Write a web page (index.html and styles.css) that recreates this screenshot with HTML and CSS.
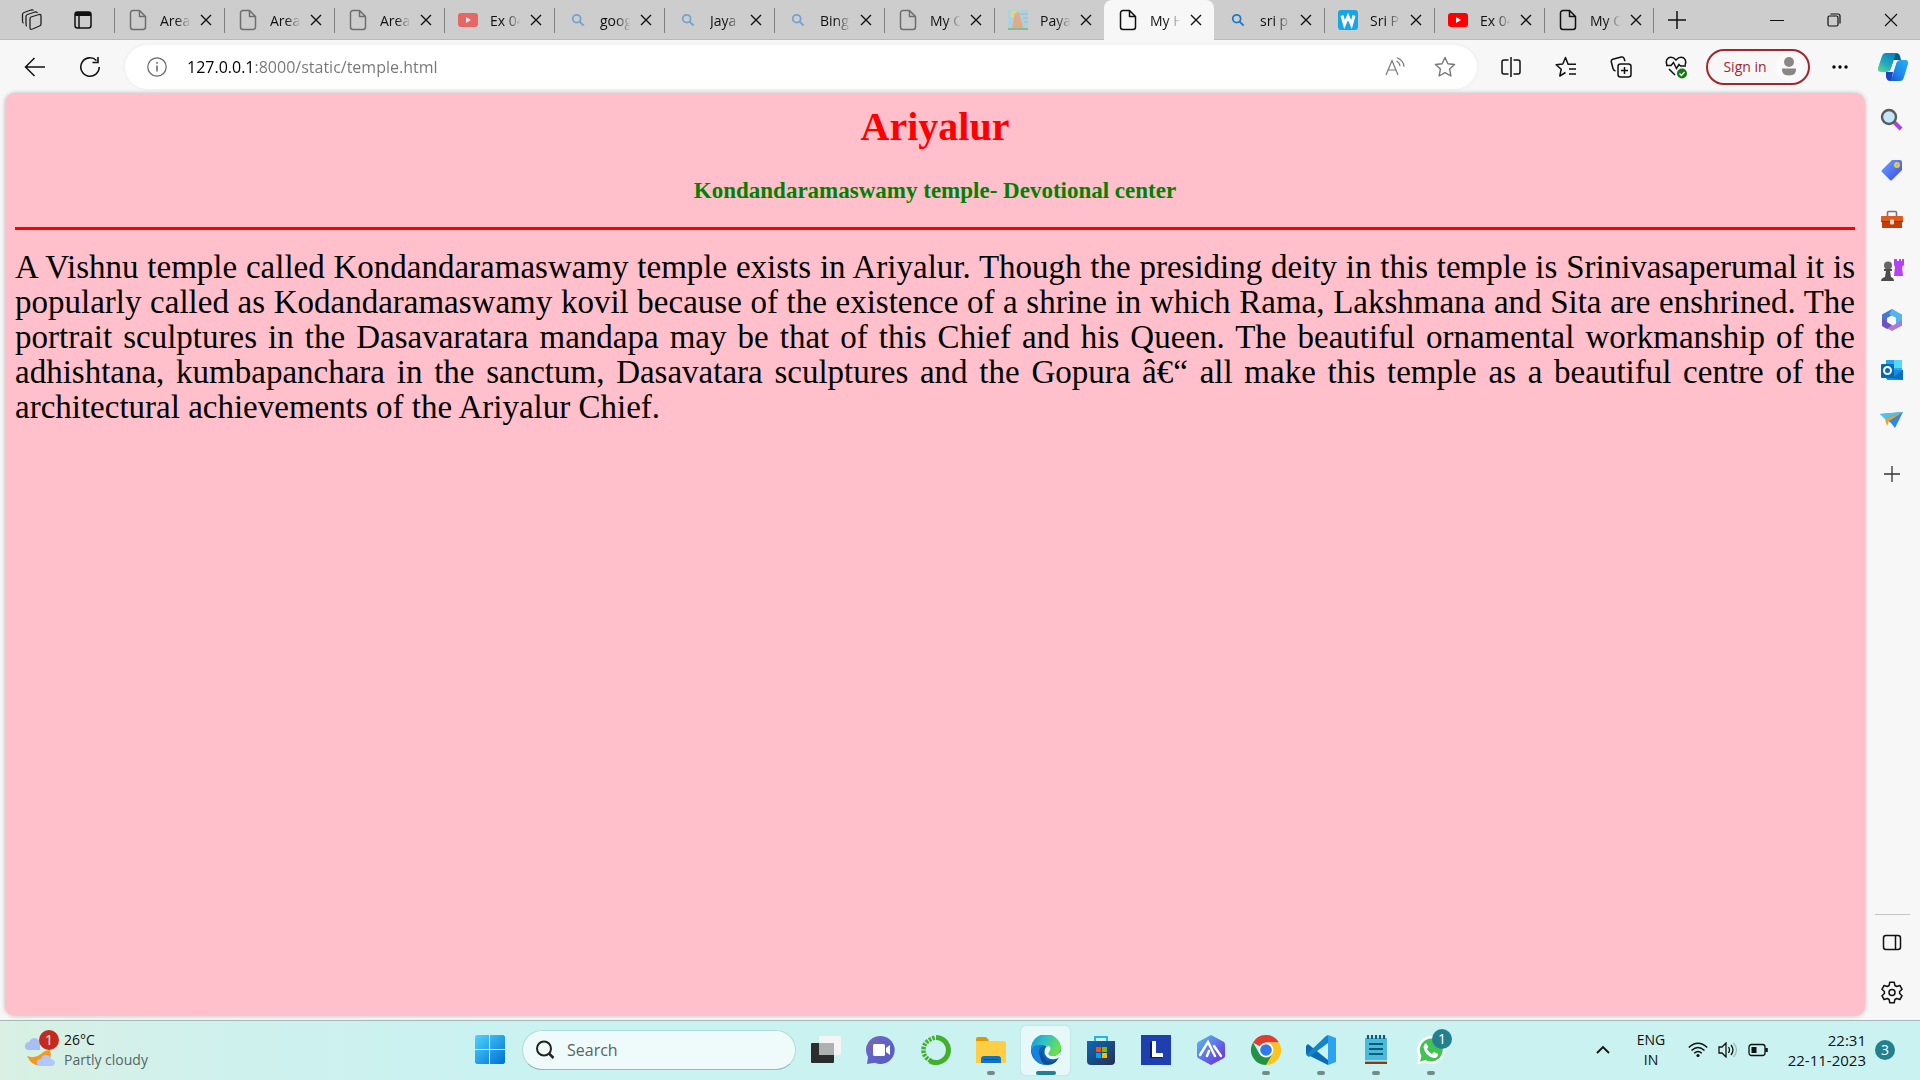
FILE: index.html
```
<!DOCTYPE html>
<html lang="en">
<head>
<meta charset="utf-8">
<title>My Home</title>
<link rel="stylesheet" href="styles.css">
</head>
<body>
<svg class="defs" aria-hidden="true">
  <defs>
    <symbol id="page" viewBox="0 0 20 22"><path d="M5 1.5h6.5l6 6V18a2.5 2.5 0 0 1-2.500 2.500H5A2.500 2.500 0 0 1 2.500 18V4A2.500 2.500 0 0 1 5 1.500zM11.500 1.500V7.500h6" fill="none" stroke="currentColor" stroke-width="1.500" stroke-linejoin="round"/></symbol>
    <symbol id="x" viewBox="0 0 12 12"><path d="M1 1l10 10M11 1L1 11" stroke="currentColor" stroke-width="1.400" fill="none"/></symbol>
    <symbol id="tube" viewBox="0 0 20 16"><rect width="20" height="14" y="1" rx="3" fill="#f00"/><path d="M8 5v6l5-3z" fill="#fff"/></symbol>
    <symbol id="lens" viewBox="0 0 16 16"><circle cx="6.500" cy="6.500" r="4.500" fill="none" stroke="#1a78d0" stroke-width="2"/><path d="M9.500 9.500l5 5" stroke="#1a78d0" stroke-width="2.200"/></symbol>
    <symbol id="paint" viewBox="0 0 20 20"><path d="M0 0h20v20H0z" fill="#8cd9ee"/><circle cx="6" cy="4" r="3.500" fill="#fbe23c"/><path d="M7 3l4-1 4 16H4z" fill="#f28a4a"/><path d="M12 4h8M15 8h5M16 12h4" stroke="#7c9ad8" stroke-width="1.200"/><path d="M0 18h20v2H0z" fill="#45a860"/></symbol>
    <symbol id="wlogo" viewBox="0 0 20 20"><rect width="20" height="20" rx="3" fill="#17a5e6"/><path d="M4 5.500l2.500 9 3.500-8 3.500 8 2.500-9" fill="none" stroke="#fff" stroke-width="3"/></symbol>
    <symbol id="plus" viewBox="0 0 20 20"><path d="M10 1v18M1 10h18" stroke="currentColor" stroke-width="1.500"/></symbol>
  </defs>
</svg>

<header class="titlebar">
  <div class="tools">
    <button aria-label="Workspaces"><svg width="22" height="22" viewBox="0 0 22 22" fill="none" stroke="#222" stroke-width="1.300" stroke-linejoin="round"><path d="M10 8l8-2.500q2-.5 2 1.500v8q0 1.500-1.500 2l-7 3Q9 21 9 19V10q0-1.500 1-2zM6 17q-1 0-1-2V7.500q0-1.500 1.500-2L14 3q2-.5 2.500 1M2.500 14Q1.500 14 1.500 12V5.500Q1.500 4 3 3.500L10 1q2-.5 2.500.5"/></svg></button>
    <button aria-label="Tab actions"><svg width="20" height="20" viewBox="0 0 20 20" fill="none" stroke="#111" stroke-width="1.500"><rect x="2" y="2" width="16" height="16" rx="2.500"/><path d="M6 6v12"/><path d="M2 4h16" stroke-width="4"/></svg></button>
  </div>
  <nav class="tabs" aria-label="Tabs">
    <div class="tab asleep"><svg class="fav"><use href="#page"/></svg><a href="#">Area</a><button aria-label="Close"><svg><use href="#x"/></svg></button></div>
    <div class="tab asleep"><svg class="fav"><use href="#page"/></svg><a href="#">Area</a><button aria-label="Close"><svg><use href="#x"/></svg></button></div>
    <div class="tab asleep"><svg class="fav"><use href="#page"/></svg><a href="#">Area</a><button aria-label="Close"><svg><use href="#x"/></svg></button></div>
    <div class="tab asleep"><svg class="fav"><use href="#tube"/></svg><a href="#">Ex 04</a><button aria-label="Close"><svg><use href="#x"/></svg></button></div>
    <div class="tab asleep"><svg class="fav small"><use href="#lens"/></svg><a href="#">goog</a><button aria-label="Close"><svg><use href="#x"/></svg></button></div>
    <div class="tab asleep"><svg class="fav small"><use href="#lens"/></svg><a href="#">Jaya</a><button aria-label="Close"><svg><use href="#x"/></svg></button></div>
    <div class="tab asleep"><svg class="fav small"><use href="#lens"/></svg><a href="#">Bing</a><button aria-label="Close"><svg><use href="#x"/></svg></button></div>
    <div class="tab asleep"><svg class="fav"><use href="#page"/></svg><a href="#">My C</a><button aria-label="Close"><svg><use href="#x"/></svg></button></div>
    <div class="tab asleep"><svg class="fav"><use href="#paint"/></svg><a href="#">Paya</a><button aria-label="Close"><svg><use href="#x"/></svg></button></div>
    <div class="tab active"><svg class="fav"><use href="#page"/></svg><a href="#">My H</a><button aria-label="Close"><svg><use href="#x"/></svg></button></div>
    <div class="tab bare"><svg class="fav small"><use href="#lens"/></svg><a href="#">sri p</a><button aria-label="Close"><svg><use href="#x"/></svg></button></div>
    <div class="tab"><svg class="fav"><use href="#wlogo"/></svg><a href="#">Sri P</a><button aria-label="Close"><svg><use href="#x"/></svg></button></div>
    <div class="tab"><svg class="fav"><use href="#tube"/></svg><a href="#">Ex 04</a><button aria-label="Close"><svg><use href="#x"/></svg></button></div>
    <div class="tab last"><svg class="fav"><use href="#page"/></svg><a href="#">My C</a><button aria-label="Close"><svg><use href="#x"/></svg></button></div>
  </nav>
  <button class="newtab" aria-label="New tab"><svg width="20" height="20"><use href="#plus"/></svg></button>
  <div class="winctl">
    <button aria-label="Minimise"><svg width="14" height="14" viewBox="0 0 14 14"><path d="M0 7.500h14" stroke="#111" stroke-width="1"/></svg></button>
    <button aria-label="Restore"><svg width="14" height="14" viewBox="0 0 14 14" fill="none" stroke="#111" stroke-width="1.200"><rect x="1" y="3" width="10" height="10" rx="1.500"/><path d="M3.500 1H11q2 0 2 2v7.500"/></svg></button>
    <button aria-label="Close window"><svg width="14" height="14" viewBox="0 0 14 14" stroke="#111" stroke-width="1.100"><path d="M1 1l12 12M13 1L1 13"/></svg></button>
  </div>
</header>

<div class="toolbar">
  <button class="nav" aria-label="Back"><svg width="22" height="22" viewBox="0 0 22 22" fill="none" stroke="#111" stroke-width="1.500"><path d="M21 11H2M10.500 2L1.500 11l9 9"/></svg></button>
  <button class="nav" aria-label="Refresh"><svg width="22" height="22" viewBox="0 0 22 22" fill="none" stroke="#111" stroke-width="1.600"><path d="M17.500 4.500A9.200 9.200 0 1 0 20.200 11M19 1v5.500h-5.500"/></svg></button>
  <div class="omnibox">
    <button aria-label="Site information"><svg width="20" height="20" viewBox="0 0 20 20" fill="none" stroke="#666" stroke-width="1.200"><circle cx="10" cy="10" r="9.200"/><path d="M10 8.500v6M10 5v1.800" stroke-width="1.500"/></svg></button>
    <input class="url" type="text" aria-label="Address" value="127.0.0.1:8000/static/temple.html" spellcheck="false">
    <button class="wide" aria-label="Read aloud"><svg width="20" height="20" viewBox="0 0 20 20" fill="none" stroke="#777" stroke-width="1.200"><path d="M1 18L7 3.500 13 18M3.200 13h7.700M11.500 4q3 1.500 3.500 5M12 .8q6.500 2.500 7 9"/></svg></button>
    <button class="wide" aria-label="Add to favourites"><svg width="22" height="22" viewBox="0 0 22 22" fill="none" stroke="#777" stroke-width="1.400" stroke-linejoin="round"><path d="M11 1.500l2.900 6.200 6.700.8-5 4.600 1.300 6.900L11 16.700 5.100 20l1.300-6.900-5-4.600 6.700-.8z"/></svg></button>
  </div>
  <div class="actions">
    <button aria-label="Split screen"><svg width="20" height="20" viewBox="0 0 20 20" fill="none" stroke="#111" stroke-width="1.500"><path d="M7.500 3H3Q1 3 1 5v10q0 2 2 2h4.500M12.500 3H17q2 0 2 2v10q0 2-2 2h-4.500M10 0v20"/></svg></button>
    <button aria-label="Favourites"><svg width="22" height="22" viewBox="0 0 22 22" fill="none" stroke="#111" stroke-width="1.500" stroke-linejoin="round"><path d="M12.500 8.200H21M14 13h7M14 18h7M13 8l-2.500-6.500L7.800 8 1.200 8.800l5 4.500L4.800 20l5.700-3.500"/></svg></button>
    <button aria-label="Collections"><svg width="22" height="22" viewBox="0 0 22 22" fill="none" stroke="#111" stroke-width="1.500"><rect x="8" y="8" width="13" height="13" rx="2.500"/><path d="M14.500 11v7M11 14.500h7M5.500 15Q3.500 14.500 3 12.500L1.300 6Q.8 4 2.800 3.300l8.500-2.200q2-.5 2.700 1.200l1 3"/></svg></button>
    <button aria-label="Browser essentials"><svg width="22" height="24" viewBox="0 0 22 24" fill="none" stroke="#111" stroke-width="1.500"><path d="M2 10Q0 5 3.500 2.800 7.500 1 11 5q3.500-4 7.500-2.200Q22 5 20 10M4 14l6 6M1 10.500h5l2.500-3 3 6 2.500-4 1.500 1.500H21"/><circle cx="17" cy="18.500" r="5" fill="#107c10" stroke="none"/><path d="M14.500 18.500l2 2 3-3.500" stroke="#fff" stroke-width="1.200"/></svg></button>
  </div>
  <button class="signin">Sign in <svg width="28" height="28" viewBox="0 0 28 28"><circle cx="14" cy="14" r="14" fill="#fbfafa"/><circle cx="14" cy="9" r="5" fill="#8b8786"/><path d="M7 15.500h14q1 6.500-7 7-8-.5-7-7z" fill="#8b8786"/></svg></button>
  <button class="more" aria-label="Settings and more"><svg width="18" height="6" viewBox="0 0 18 6"><circle cx="3" cy="3" r="1.700"/><circle cx="9" cy="3" r="1.700"/><circle cx="15" cy="3" r="1.700"/></svg></button>
  <button class="copilot" aria-label="Copilot"><svg width="30" height="28" viewBox="0 0 30 28"><defs><linearGradient id="cp1" x1="0" y1="1" x2=".6" y2="0"><stop stop-color="#62dd8e"/><stop offset=".5" stop-color="#22a9bd"/><stop offset="1" stop-color="#0a86c0"/></linearGradient><linearGradient id="cp2" x1="0" y1="1" x2="1" y2="0"><stop stop-color="#1a4fd6"/><stop offset=".5" stop-color="#1c8eea"/><stop offset="1" stop-color="#25b0f2"/></linearGradient></defs><path d="M15 0h3q3 0 4 3l1 4h-8z" fill="#075c8e"/><path d="M8 19h7l-1 6q-1 3-2 3-3 0-4-4z" fill="#1646c0"/><path d="M8 0h12q-2 0-3 2l-1 5-3 9q-1 3-4 3H3q-4 0-3-4L4 3Q5 0 8 0z" fill="url(#cp1)"/><path d="M22 28H11q2-1 3-4l4-13q1-4 4-4h5q4 0 3 4l-4 13q-1 4-4 4z" fill="url(#cp2)"/><path d="M16 7h5q-2 1-3 3l-2 6q-1 3-4 3H9q3 0 4-3z" fill="#fff"/></svg></button>
</div>

<div class="middle">
  <main class="viewport">
    <h1>Ariyalur</h1>
    <h3>Kondandaramaswamy temple- Devotional center</h3>
    <hr>
    <p>A Vishnu temple called Kondandaramaswamy temple exists in Ariyalur. Though the presiding deity in this temple is Srinivasaperumal it is popularly called as Kodandaramaswamy kovil because of the existence of a shrine in which Rama, Lakshmana and Sita are enshrined. The portrait sculptures in the Dasavaratara mandapa may be that of this Chief and his Queen. The beautiful ornamental workmanship of the adhishtana, kumbapanchara in the sanctum, Dasavatara sculptures and the Gopura â€“ all make this temple as a beautiful centre of the architectural achievements of the Ariyalur Chief.</p>
  </main>
  <aside class="sidebar">
    <button aria-label="Search"><svg viewBox="0 0 24 24"><path d="M14 14l7 7" stroke="#b23bef" stroke-width="4"/><path d="M13 13l3 3" stroke="#777" stroke-width="2.500"/><circle cx="9" cy="9" r="7" fill="#c3e6fa" stroke="#5b5b5b" stroke-width="2.400"/></svg></button>
    <button aria-label="Shopping"><svg viewBox="0 0 24 24"><defs><linearGradient id="tag" x1="0" y1="0" x2="1" y2="1"><stop stop-color="#6ea8ff"/><stop offset="1" stop-color="#3845e8"/></linearGradient></defs><path d="M12 2h8q2 0 2 2v8L12 22q-1 1-2 0L2 14q-1-1 0-2z" fill="url(#tag)"/><circle cx="17" cy="7" r="2.200" fill="#9bd" stroke="#fc2" stroke-width="1.500"/></svg></button>
    <button aria-label="Tools"><svg viewBox="0 0 24 24"><path d="M7.500 8V4.500Q7.500 3.500 8.500 3.500h7q1 0 1 1V8" fill="none" stroke="#777" stroke-width="1.600"/><path d="M2 8h20q1 0 1 1v5H1V9q0-1 1-1z" fill="#e35b1b"/><path d="M2 14h20v6H2z" fill="#c43d0b"/><path d="M1 13.500h22" stroke="#962c08"/><rect x="10" y="11.500" width="4" height="5" rx="1" fill="#ddd"/></svg></button>
    <button aria-label="Games"><svg viewBox="0 0 24 24"><path d="M14 1h3v2h2V1h2v2h1V1h2v6l-2 2 1 9h-9l1-9-1-2z" fill="#b541f2"/><circle cx="8" cy="7.500" r="4" fill="#666"/><path d="M4 11h8v2h-2l1 6q3 1 3 4H1q0-3 4-4l1-6H4z" fill="#4d4d4d"/></svg></button>
    <button aria-label="Microsoft 365"><svg viewBox="0 0 24 24"><path d="M12 1L2 6.500v11l5 3V10l8-4.500V3z" fill="#4a75d8"/><path d="M12 1l10 5.500v11l-6 3V10L9 6z" fill="#53b5ed"/><path d="M22 12v5.500L12 23 4 18.500l4-3 5 2z" fill="#ad78d7"/><path d="M2 10v8l5 3 5-4-5-3z" fill="#7250bd"/><path d="M12 8l4 2v4l-4 3-4-3v-4z" fill="#f7f7f7"/></svg></button>
    <button aria-label="Outlook"><svg viewBox="0 0 24 24"><path d="M6 2h15q1 0 1 1v18H6z" fill="#28a8ea"/><path d="M14 2h8v8h-8z" fill="#50d9ff"/><path d="M9 12h14v10H7z" fill="#1490df"/><path d="M23 12L12 20l11 2z" fill="#0a6fbe"/><rect x="1" y="6" width="13" height="14" rx="1" fill="#0868b8"/><circle cx="7.500" cy="12.500" r="3.500" fill="none" stroke="#fff" stroke-width="2"/></svg></button>
    <button aria-label="Drop"><svg viewBox="0 0 24 24"><path d="M0 6l23-2-8 16-4-5z" fill="#2f88e8"/><path d="M0 6l23-2L5 11z" fill="#45c5f2"/><path d="M5 11l18-7-14 9-2 5z" fill="#f6a01a"/></svg></button>
    <button class="add" aria-label="Customize"><svg viewBox="0 0 20 20"><path d="M10 2v16M2 10h16" stroke="#333" stroke-width="1.300"/></svg></button>
    <div class="foot">
      <button aria-label="Hide sidebar"><svg viewBox="0 0 24 24" fill="none" stroke="#111" stroke-width="1.500"><rect x="3.500" y="4.500" width="17" height="14" rx="2.500"/><path d="M15.500 4.500v14"/></svg></button>
      <button aria-label="Settings"><svg viewBox="0 0 24 24" fill="none" stroke="#111" stroke-width="1.500" stroke-linejoin="round"><path d="M9.800 2.200h4.400l.7 3.300 1.800 1 3.200-1 2.200 3.800-2.500 2.200v2l2.500 2.200-2.200 3.800-3.200-1-1.800 1-.7 3.300H9.800l-.7-3.300-1.800-1-3.200 1-2.200-3.800 2.500-2.200v-2L1.900 9.300l2.200-3.800 3.200 1 1.800-1z"/><circle cx="12" cy="12.500" r="3"/></svg></button>
    </div>
  </aside>
</div>

<footer class="taskbar">
  <button class="weather">
    <span class="wicon"><svg width="32" height="36" viewBox="0 0 32 36"><path d="M4 18q-4-1-3-5 1-3 4-3 2-4 6-4 4 1 5 5v7z" fill="#a7bff2"/><path d="M3 24q8 3 14-2 4-4 9-4 3 9-5 14-12 5-18-8z" fill="#f19a20"/><path d="M16 34q-4-1-3-5 1-2 4-2 1-4 5-4 4 0 5 4 4 1 4 4-1 3-3 3z" fill="#b1c7f7"/></svg><span class="badge red">1</span></span>
    <span class="wtext"><span>26°C</span><span class="dim">Partly cloudy</span></span>
  </button>
  <div class="dock">
    <button class="start" aria-label="Start"><svg width="30" height="30" viewBox="0 0 30 30"><defs><linearGradient id="win" x1="0" y1="0" x2="1" y2="1"><stop stop-color="#4fd2ff"/><stop offset="1" stop-color="#0070d2"/></linearGradient></defs><path d="M1.500 0H14v14H0V1.500zM15 0h13.500L30 1.500V14H15zM0 15h14v14H1.500L0 27.500zM15 15h15v12.500L28.500 29H15z" fill="url(#win)"/></svg></button>
    <label class="search"><svg width="20" height="20" viewBox="0 0 20 20" fill="none" stroke="#222"><circle cx="9" cy="8.500" r="7" stroke-width="2"/><path d="M14 13.500l4.500 4.500" stroke-width="2.500"/></svg><input type="text" placeholder="Search" aria-label="Search"></label>
    <button class="app" aria-label="Task view"><svg viewBox="0 0 30 30"><rect y="8" width="23" height="20" rx="1" fill="#2d2d2d"/><rect x="8" y="1" width="22" height="19" rx="1" fill="#f4f4f4"/><path d="M8 8h15v12H8z" fill="#aeb1b1"/></svg></button>
    <button class="app" aria-label="Chat"><svg viewBox="0 0 30 30"><defs><linearGradient id="chat" x1="0" y1="0" x2="1" y2="1"><stop stop-color="#8661a9"/><stop offset=".4" stop-color="#6264c9"/><stop offset="1" stop-color="#5658c0"/></linearGradient></defs><path d="M15 1a14 14 0 1 1-6 26.800L1 29l1-7A14 14 0 0 1 15 1z" fill="url(#chat)"/><rect x="7" y="9" width="12" height="12" rx="1.500" fill="#fff"/><path d="M20 13l4-3v10l-4-3z" fill="#fff"/></svg></button>
    <button class="app" aria-label="Anaconda"><svg viewBox="0 0 30 30" fill="none" stroke="#43b02a"><path d="M15 2.500a12.500 12.500 0 1 1-6 23.500" stroke-width="5"/><path d="M10 26Q2 22 2.500 14T14 2.500" stroke-width="4.500" stroke-dasharray="2.500 1.200"/></svg></button>
    <button class="app open" aria-label="File Explorer"><svg viewBox="0 0 30 30"><path d="M0 4q0-2 2-2h8l3 3-2 3H0z" fill="#d99a05"/><path d="M0 6h28q2 0 2 2v20H0z" fill="#ffce45"/><path d="M5 28v-4q0-3 3-3h14q3 0 3 3v4z" fill="#1272c4"/><path d="M8 24.500h14" stroke="#0a4f8c"/></svg></button>
    <button class="app open current" aria-label="Edge"><svg viewBox="0 0 30 30"><defs><linearGradient id="ed1" x1="0" y1="0" x2="1" y2=".4"><stop stop-color="#1a8fd2"/><stop offset=".5" stop-color="#2dc3c7"/><stop offset="1" stop-color="#6be04a"/></linearGradient></defs><circle cx="15" cy="15" r="15" fill="#0c62b8"/><path d="M0 15A15 15 0 0 1 30 13q0 7-8 8-6 0-4-4 0-6-7-7Q4 10 0 15z" fill="url(#ed1)"/><path d="M0 15q4-7 12-4-5 2-4 8 2 8 10 10.500Q4 32 0 15z" fill="#1683dc"/><path d="M12 14q-3 7 4 12 6 2 11-2-5 8-14 5-7-7-1-15z" fill="#114c94"/><path d="M18 11q3 2 0 6-2 4 4 4 5 0 8-5l-1 6q-6 4-12 1-5-4-3-9 1-3 4-3z" fill="#e8f8f8"/></svg></button>
    <button class="app" aria-label="Store"><svg viewBox="0 0 30 30"><defs><linearGradient id="st" x1="0" y1="0" x2="1" y2="1"><stop stop-color="#0c69b8"/><stop offset="1" stop-color="#272f51"/></linearGradient></defs><path d="M9 7V2h12v5" fill="none" stroke="#1fb5f4" stroke-width="2"/><path d="M1 6h28v20q0 4-4 4H5q-4 0-4-4z" fill="url(#st)"/><path d="M10 12h5v5h-5z" fill="#f25022"/><path d="M16 12h5v5h-5z" fill="#7fba00"/><path d="M10 18h5v5h-5z" fill="#00a4ef"/><path d="M16 18h5v5h-5z" fill="#ffb900"/></svg></button>
    <button class="app" aria-label="Lens"><svg viewBox="0 0 30 30"><path d="M0 0h30v30H0z" fill="#1e3fae"/><path d="M11 6l-2 2v15h12v-3H11z" fill="#0d1c5c"/><path d="M11 6h4v12h7v4H11z" fill="#fff"/></svg></button>
    <button class="app" aria-label="Android tool"><svg viewBox="0 0 30 30"><defs><linearGradient id="hx" x1="0" y1="0" x2="1" y2="1"><stop stop-color="#55c2ec"/><stop offset="1" stop-color="#6c1fe6"/></linearGradient></defs><path d="M15 0l13 7q1 1 1 3v11q0 1-1 2l-13 7-13-7q-1-1-1-2V9q0-1 1-2z" fill="url(#hx)"/><path d="M4 20L12 7l7 14M11 21l2-5M18 11l7 10" fill="none" stroke="#fff" stroke-width="2.500" stroke-linecap="round"/></svg></button>
    <button class="app open" aria-label="Chrome"><svg viewBox="0 0 30 30"><path d="M15 15L2 7.500A15 15 0 0 1 28 7.500H15z" fill="#e33b2e"/><path d="M15 7.500h13A15 15 0 0 1 15 30l6.500-11.200z" fill="#fcc31e"/><path d="M2 7.500A15 15 0 0 0 15 30l6.500-11.200h-13z" fill="#229342"/><circle cx="15" cy="15" r="7.500" fill="#fff"/><circle cx="15" cy="15" r="5.800" fill="#3079ed"/></svg></button>
    <button class="app open" aria-label="Visual Studio Code"><svg viewBox="0 0 30 30"><path d="M0 11l2-2 20 16v5L0 19z" fill="#0a6db3"/><path d="M22 0v8L3 22l-3-2L20 1z" fill="#1484cb"/><path d="M22 0l8 3v24l-8 3z" fill="#2ba3ee"/></svg></button>
    <button class="app open" aria-label="Notepad"><svg viewBox="0 0 30 30"><path d="M4 3h22v23H4z" fill="#4cbad9"/><path d="M4 26h22v3H4z" fill="#8a3d0b"/><path d="M4 26h22" stroke="#fff"/><path d="M8 9h14M8 14h14M8 19h14" stroke="#0a5c7c" stroke-width="2"/><path d="M7 0v4M11 0v4M15 0v4M19 0v4M23 0v4" stroke="#0a5c7c" stroke-width="2.200"/></svg></button>
    <button class="app open" aria-label="WhatsApp"><svg viewBox="0 0 30 30"><path d="M15 1a14 14 0 1 1-6 26.500L1 29.500 3 22A14 14 0 0 1 15 1z" fill="#fff"/><path d="M15 3.500A11.500 11.500 0 1 1 9.500 25L4 26.500 5.500 21A11.500 11.500 0 0 1 15 3.500z" fill="#3fc351"/><path d="M10 8l2.500 4-1.500 2q2 4 5 5l2-2 4 2q0 4-4 4-9-2-10.500-11Q8 9 10 8z" fill="#fff"/></svg><span class="badge teal">1</span></button>
  </div>
  <div class="tray">
    <button class="chev" aria-label="Hidden icons"><svg width="14" height="10" viewBox="0 0 14 10"><path d="M1 8l6-6 6 6" fill="none" stroke="#111" stroke-width="1.800"/></svg></button>
    <button class="lang"><span>ENG</span><span>IN</span></button>
    <button class="status" aria-label="Network, volume, battery">
      <svg width="20" height="16" viewBox="0 0 20 16" fill="none" stroke="#111" stroke-width="1.500"><path d="M.8 5.500q9.200-8.500 18.400 0M3.500 8.500q6.500-6 13 0M6.200 11.300q3.800-3.500 7.600 0"/><circle cx="10" cy="13.500" r="1.600" fill="#111" stroke="none"/></svg>
      <svg width="20" height="16" viewBox="0 0 20 16" fill="none" stroke="#111" stroke-width="1.300"><path d="M1 5h3l4-4v14l-4-4H1zM10.500 5q2 3 0 6M13 3q4 5 0 10"/><path d="M15.500 1q6 7 0 14" stroke="#9fbcbc"/></svg>
      <svg width="20" height="16" viewBox="0 0 20 16" fill="none" stroke="#111" stroke-width="1.300"><rect x="1" y="2.500" width="16" height="11" rx="2.500"/><path d="M3.500 5h5v6h-5z" fill="#111" stroke="none"/><path d="M18.500 6v4" stroke-width="2.500"/></svg>
    </button>
    <button class="clock"><span>22:31</span><span>22-11-2023</span></button>
    <span class="badge teal count">3</span>
  </div>
</footer>
</body>
</html>
```
FILE: styles.css
```
* { box-sizing: border-box; }
body {
  margin: 0;
  height: 100vh;
  display: flex;
  flex-direction: column;
  overflow: hidden;
  background: #f7f7f7;
  color: #111;
  font-family: "Open Sans", "Noto Sans", sans-serif;
  font-size: 14px;
}
button {
  display: flex;
  align-items: center;
  justify-content: center;
  padding: 0;
  border: 0;
  background: none;
  color: inherit;
  font: inherit;
}
svg { display: block; flex: none; }
.defs { position: absolute; width: 0; height: 0; }

/* Title bar */
.titlebar {
  display: flex;
  height: 40px;
  flex: none;
  background: #cdcdcd;
  box-shadow: inset 0 -1px #bababa;
}
.tools { display: flex; width: 114px; padding: 0 5px 0 6px; flex: none; }
.tools button { width: 53px; }
.tabs { display: flex; flex: 0 1 1540px; min-width: 0; }
.tab {
  display: flex;
  align-items: center;
  flex: 1 1 110px;
  min-width: 0;
  padding: 0 12px 0 14px;
  background: linear-gradient(#808080, #808080) 0 8px / 1px 25px no-repeat;
}
.tab.last {
  background: linear-gradient(#808080, #808080) 0 8px / 1px 25px no-repeat,
    linear-gradient(#808080, #808080) 100% 8px / 1px 25px no-repeat;
}
.tab.bare { background: none; }
.tab.active {
  background: #f7f7f7;
  border-radius: 8px 8px 0 0;
}
.fav { width: 20px; height: 22px; }
.fav.small { padding: 3px; }
.asleep .fav { opacity: .5; }
.tab a {
  flex: 1;
  margin: 0 8px 0 12px;
  overflow: hidden;
  white-space: nowrap;
  color: #111;
  text-decoration: none;
  mask-image: linear-gradient(90deg, #000 50%, transparent 95%);
}
.tab button svg { width: 12px; height: 12px; }
.newtab { width: 46px; }
.winctl { display: flex; margin-left: auto; padding-right: 1px; }
.winctl button { width: 57px; }

/* Toolbar */
.toolbar {
  display: flex;
  align-items: center;
  flex: none;
  height: 53px;
  padding: 0 8px 0 7px;
}
.nav { width: 55px; height: 44px; }
.omnibox {
  display: flex;
  align-items: center;
  flex: 1;
  height: 44px;
  margin-left: 8px;
  padding: 0 7px 0 14px;
  border-radius: 22px;
  background: #fff;
  box-shadow: 0 0 3px #e4e4e4;
}
.omnibox button { width: 36px; height: 36px; }
.omnibox .wide { width: 50px; }
.url {
  flex: 1;
  min-width: 0;
  margin-left: 12px;
  padding: 0;
  border: 0;
  outline: 0;
  font: 16px/24px "Open Sans", "Noto Sans", sans-serif;
  color: transparent;
  background: linear-gradient(90deg, #000 67px, #757575 67px);
  background-clip: text;
}
.actions { display: flex; padding: 0 3px 0 6px; }
.actions button { width: 55px; }
.signin {
  width: 104px;
  height: 36px;
  padding-left: 10px;
  gap: 8px;
  border: 2px solid #a4262c;
  border-radius: 18px;
  color: #a4262c;
}
.more { width: 60px; }
.copilot { width: 38px; margin-left: 4px; }

/* Page and side bar */
.middle { display: flex; flex: 1; min-height: 0; padding: 0 0 4px 5px; }
.viewport {
  flex: 1;
  min-width: 0;
  padding: 11px 10px;
  border-radius: 10px;
  background: pink;
  box-shadow: 0 0 4px #bbb;
  color: #000;
  font-family: "Liberation Serif", serif;
}
.viewport h1 {
  margin: 0;
  color: red;
  font-size: 40px;
  line-height: 46px;
  text-align: center;
}
.viewport h3 {
  margin: 27px 0 23px;
  color: green;
  font-size: 23px;
  line-height: 27px;
  text-align: center;
}
.viewport hr { height: 3px; margin: 0; border: 0; background: red; }
.viewport p {
  margin: 20px 0 0;
  font-family: Georgia, "Liberation Serif", serif;
  font-size: 33px;
  line-height: 35px;
  text-align: justify;
}
.sidebar {
  display: flex;
  flex-direction: column;
  align-items: center;
  width: 55px;
  flex: none;
  padding: 2px 1px 0 0;
}
.sidebar button { width: 50px; height: 50px; flex: none; }
.sidebar svg { width: 24px; height: 24px; }
.sidebar .add { margin-top: 4px; }
.sidebar .add svg { width: 20px; height: 20px; }
.foot { margin-top: auto; border-top: 1px solid #c4c4c4; width: 35px; padding-top: 3px; }
.sidebar .foot button { width: 35px; height: 49px; }

/* Taskbar */
.taskbar {
  display: grid;
  grid-template-columns: 1fr auto 1fr;
  flex: none;
  height: 60px;
  padding-bottom: 1px;
  border-top: 1px solid #a6b9b8;
  background: linear-gradient(90deg, #d9f0e3, #cff1ee 12%, #c9f2f1 26%, #caf2f1);
}
.weather { justify-self: start; padding-left: 24px; gap: 8px; line-height: 20px; }
.wicon { position: relative; }
.wtext { display: flex; flex-direction: column; align-items: flex-start; }
.dim { color: #566663; }
.badge {
  display: flex;
  align-items: center;
  justify-content: center;
  width: 20px;
  height: 20px;
  border-radius: 50%;
  color: #fff;
}
.red { position: absolute; top: -2px; right: -3px; background: #c42b1c; }
.teal { background: #24808f; }
.dock { display: flex; align-items: center; }
.start { width: 55px; height: 48px; }
.search {
  display: flex;
  align-items: center;
  width: 274px;
  height: 40px;
  margin: 0 2px 0 5px;
  padding: 0 12px;
  gap: 12px;
  border: 1px solid #b3dada;
  border-bottom-color: #93b9b9;
  border-radius: 20px;
  background: #effbfb;
}
.search input {
  min-width: 0;
  flex: 1;
  padding: 0;
  border: 0;
  outline: 0;
  background: none;
  font: 16px/24px "Open Sans", "Noto Sans", sans-serif;
}
.search input::placeholder { color: #596362; opacity: 1; }
.app {
  position: relative;
  width: 49px;
  height: 49px;
  margin: 0 3px;
  border-radius: 5px;
}
.app svg { width: 30px; height: 30px; }
.app.current { background: #e6f9f8; box-shadow: 0 0 2px #b5d5d5; }
.app.open::after {
  content: "";
  position: absolute;
  bottom: 0;
  width: 8px;
  height: 4px;
  border-radius: 2px;
  background: #748a89;
}
.app.current::after { width: 20px; background: #24808f; }
.app .badge { position: absolute; top: 3px; right: 3px; }
.tray { display: flex; align-items: center; justify-content: flex-end; padding-right: 25px; line-height: 20px; }
.chev { width: 40px; height: 48px; }
.lang, .clock { flex-direction: column; }
.lang { width: 56px; }
.status { gap: 10px; padding: 0 11px 0 9px; }
.clock { align-items: flex-end; width: 87px; font-size: 15px; }
.count { margin-left: 9px; }
```
